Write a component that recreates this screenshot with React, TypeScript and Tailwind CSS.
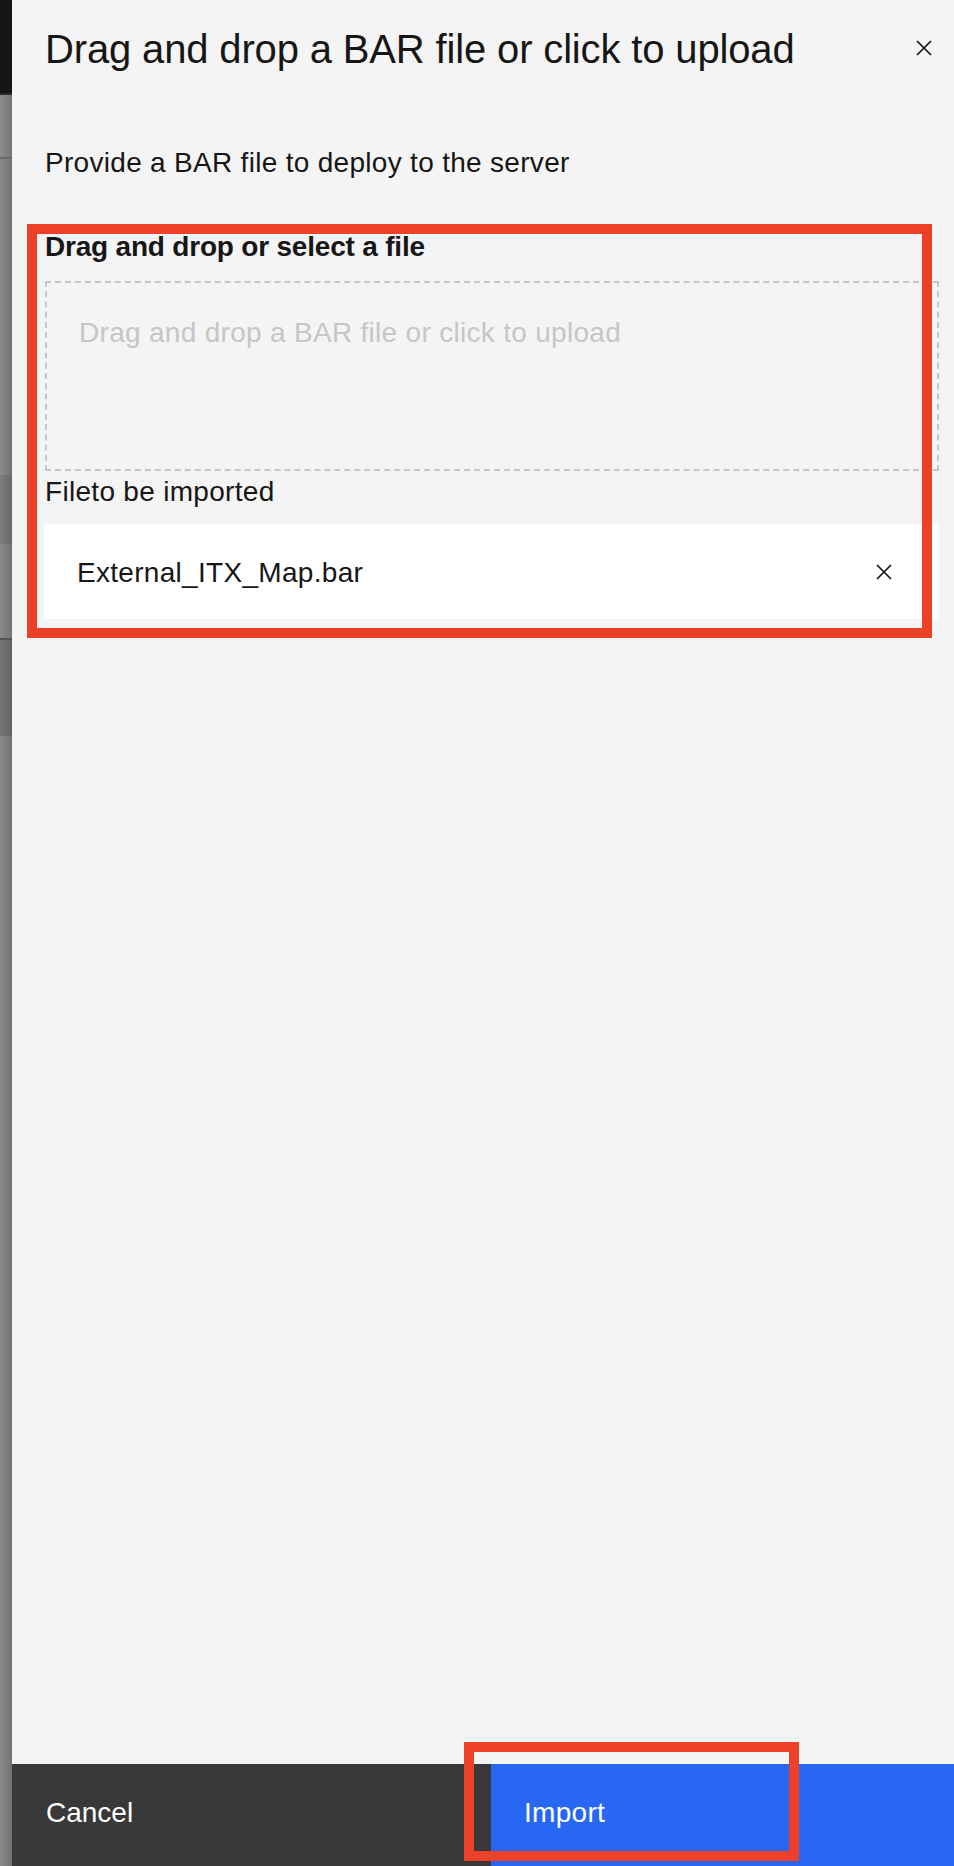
import React from "react";

function CloseIcon() {
  return (
    <svg width="16" height="16" viewBox="0 0 16 16" fill="none" aria-hidden="true">
      <path d="M1 1 L15 15 M15 1 L1 15" stroke="#161616" strokeWidth="1.7" />
    </svg>
  );
}

export default function App() {
  return (
    <div className="relative flex w-[954px] h-[1866px] overflow-hidden font-['Liberation_Sans',Arial,sans-serif] text-[#161616]">
      {/* underlying page, dimmed */}
      <div className="flex w-[12px] flex-col">
        <div className="h-[93px] bg-[#151515]" />
        <div className="h-[2px] bg-[#2a2a2a]" />
        <div className="h-[62px] bg-gradient-to-r from-[#8e8e8e] to-[#747474]" />
        <div className="h-[2px] bg-[#6a6a6a]" />
        <div className="h-[316px] bg-gradient-to-r from-[#8c8c8c] to-[#727272]" />
        <div className="h-[69px] bg-gradient-to-r from-[#7e7e7e] to-[#686868]" />
        <div className="h-[94px] bg-gradient-to-r from-[#8c8c8c] to-[#727272]" />
        <div className="h-[2px] bg-[#545454]" />
        <div className="h-[96px] bg-gradient-to-r from-[#777777] to-[#626262]" />
        <div className="flex-1 bg-gradient-to-r from-[#8c8c8c] to-[#727272]" />
      </div>

      {/* side panel */}
      <div className="flex flex-1 flex-col bg-[#f4f4f4]">
        <div className="flex items-start justify-between pl-[33px] pr-[22px] pt-[25px]">
          <h1 className="text-[40px] leading-[48px] font-normal tracking-[-0.15px]">
            Drag and drop a BAR file or click to upload
          </h1>
          <button className="mt-[15px] flex h-[16px] w-[16px] items-center justify-center">
            <CloseIcon />
          </button>
        </div>

        <div className="flex flex-col pl-[33px] pr-[14px]">
          <p className="mt-[72px] text-[28px] leading-[36px] tracking-[0.3px]">
            Provide a BAR file to deploy to the server
          </p>
          <p className="mt-[48px] text-[28px] leading-[36px] font-bold tracking-[-0.2px]">
            Drag and drop or select a file
          </p>
          <div className="mt-[16px] mr-[1px] h-[190px] border-2 border-dashed border-[#c6c6c6] pl-[32px] pt-[32px]">
            <span className="text-[28px] leading-[36px] tracking-[0.3px] text-[#c6c6c6]">
              Drag and drop a BAR file or click to upload
            </span>
          </div>
          <p className="mt-[3px] text-[28px] leading-[36px] tracking-[0.3px]">
            Fileto be imported
          </p>
          <div className="mt-[14px] -ml-[1px] flex h-[95px] items-center justify-between bg-white pl-[33px] pr-[48px]">
            <span className="pt-[3px] text-[28px] leading-[36px] tracking-[0.3px]">
              External_ITX_Map.bar
            </span>
            <CloseIcon />
          </div>
        </div>

        <div className="flex-1" />

        <div className="flex h-[102px]">
          <button className="flex w-[479px] items-start bg-[#393939] pl-[34px] pt-[31px] text-left text-[28px] leading-[36px] text-white">
            Cancel
          </button>
          <button className="flex flex-1 items-start bg-[#2767f4] pl-[33px] pt-[31px] text-left text-[28px] leading-[36px] text-white tracking-[0.3px]">
            Import
          </button>
        </div>
      </div>

      {/* annotation highlights */}
      <div className="pointer-events-none absolute left-[27px] top-[224px] h-[414px] w-[905px] border-[10px] border-[#ec4128]" />
      <div className="pointer-events-none absolute left-[464px] top-[1742px] h-[119px] w-[335px] border-[10px] border-[#ec4128]" />
    </div>
  );
}
